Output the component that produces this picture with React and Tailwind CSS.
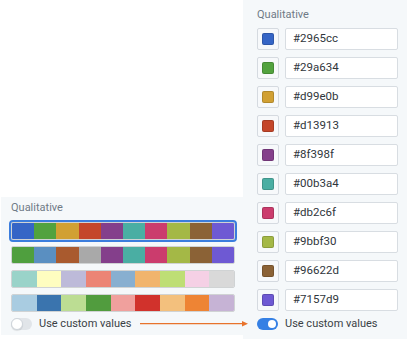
const row1 = ["#3565c6", "#52a23e", "#d1a033", "#c4462a", "#843f8b", "#4aaea3", "#cb3c6d", "#a4b846", "#8b6236", "#6e59d3"];
const row2 = ["#4f9f3e", "#5a8fc1", "#a95a2e", "#a9a9a9", "#843f8b", "#4aaea3", "#cb3c6d", "#a4b846", "#8b6236", "#6e59d3"];
const row3 = ["#9ad3c9", "#fefdc0", "#bdbad9", "#ec8475", "#88afd0", "#f1b46c", "#bede75", "#f5d0e5", "#d9d9d9"];
const row4 = ["#a9cce1", "#3a74ae", "#bcdd93", "#519c3e", "#f0a09d", "#d1322c", "#f3c07d", "#ee8434", "#c6b3d5"];

const custom = [
  ["#2965cc", "#3565c6"],
  ["#29a634", "#52a23e"],
  ["#d99e0b", "#d1a033"],
  ["#d13913", "#c4462a"],
  ["#8f398f", "#843f8b"],
  ["#00b3a4", "#4aaea3"],
  ["#db2c6f", "#cb3c6d"],
  ["#9bbf30", "#a4b846"],
  ["#96622d", "#8b6236"],
  ["#7157d9", "#6e59d3"],
];

function PaletteRow({ colors, selected }) {
  return (
    <div
      className={
        "h-[22px] rounded-[4px] border-2 " +
        (selected ? "border-[#3b7ddd]" : "border-transparent")
      }
    >
      <div className="flex h-full rounded-[2px] overflow-hidden border border-black/15">
        {colors.map((c, i) => (
          <div key={i} className="flex-1 h-full" style={{ background: c }} />
        ))}
      </div>
    </div>
  );
}

export default function App() {
  return (
    <div className="relative flex w-[407px] h-[339px] bg-white overflow-hidden font-['Roboto',sans-serif]">
      <div className="flex flex-col justify-end w-[243px] h-full">
        <div className="ml-px mb-[4px] h-[138px] bg-[#f5f8fa] pl-[8px] pr-[6px] pt-[3px] flex flex-col">
          <div className="h-[16px] leading-[16px] pl-[2px] text-[11px] text-[#6f7a86]">Qualitative</div>
          <div className="mt-[4px] flex flex-col gap-[2px]">
            <PaletteRow colors={row1} selected />
            <PaletteRow colors={row2} />
            <PaletteRow colors={row3} />
            <PaletteRow colors={row4} />
          </div>
          <div className="mt-[3px] h-[14px] pl-[2px] flex items-center gap-[7px]">
            <div className="relative w-[21px] h-[12px] rounded-full bg-[#e1e5e9]">
              <div className="absolute left-0 top-[0px] w-[12px] h-[12px] rounded-full bg-white border border-[#cfd5db] shadow-[0_1px_1px_rgba(0,0,0,0.1)]" />
            </div>
            <span className="text-[11px] leading-[14px] text-[#3a3f45]">Use custom values</span>
          </div>
        </div>
      </div>

      <div className="w-[164px] h-full bg-[#f5f8fa] pl-[14px] pr-[9px] pt-[7px] flex flex-col">
        <div className="h-[16px] leading-[16px] text-[11px] text-[#6f7a86]">Qualitative</div>
        <div className="mt-[5px] flex flex-col gap-[7px]">
          {custom.map(([hex, shown]) => (
            <div key={hex} className="flex items-center gap-[6px] h-[22px]">
              <div className="w-[22px] h-[22px] shrink-0 rounded-[2px] border border-[#d5dae0] bg-[#f7f9fb] flex items-center justify-center">
                <div className="w-[12px] h-[12px] rounded-[2px] border border-black/15" style={{ background: shown }} />
              </div>
              <div className="flex-1 h-[22px] rounded-[2px] border border-[#d8dde2] bg-white pl-[7px] flex items-center text-[11.5px] text-[#30363c]">
                {hex}
              </div>
            </div>
          ))}
        </div>
        <div className="mt-[5px] h-[16px] flex items-center gap-[7px]">
          <div className="relative w-[21px] h-[12px] rounded-full bg-[#3580e4]">
            <div className="absolute right-[2px] top-[2px] w-[8px] h-[8px] rounded-full bg-white" />
          </div>
          <span className="text-[11px] leading-[14px] text-[#3a3f45]">Use custom values</span>
        </div>
      </div>

      <svg className="absolute left-[140px] top-[320px]" width="110" height="8" viewBox="0 0 110 8">
        <line x1="0" y1="3.7" x2="103" y2="3.7" stroke="#e8732c" strokeWidth="1.2" />
        <polygon points="102,1 108,3.7 102,6.4" fill="#e8732c" />
      </svg>
    </div>
  );
}
